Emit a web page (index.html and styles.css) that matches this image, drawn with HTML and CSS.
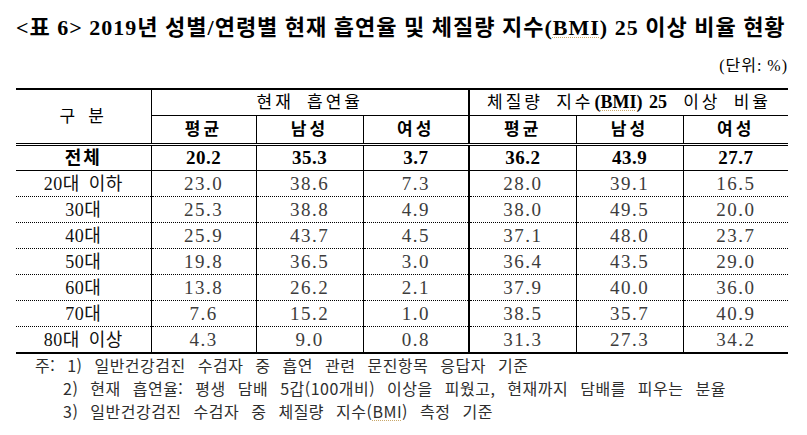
FILE: index.html
```html
<!DOCTYPE html>
<html lang="ko">
<head>
<meta charset="utf-8">
<title>표 6</title>
<link rel="stylesheet" href="styles.css">
</head>
<body>
<div class="page">
  <h1 class="title">&lt;표 6&gt; 2019년 성별/연령별 현재 흡연율 및 체질량 지수(<span class="bmi">BMI</span>) 25 이상 비율 현황</h1>
  <div class="unit">(단위: %)</div>
  <table class="stats">
    <colgroup>
      <col class="c-label"><col class="c-a"><col class="c-b"><col class="c-c"><col class="c-d"><col class="c-e"><col class="c-f">
    </colgroup>
    <thead>
      <tr class="h1">
        <th rowspan="2" class="label-head">구 분</th>
        <th colspan="3" class="group">현재 흡연율</th>
        <th colspan="3" class="group split">체질량 지수<span class="latin">(<span class="bmi">BMI</span>) 25</span> 이상 비율</th>
      </tr>
      <tr class="h2">
        <th>평균</th><th>남성</th><th>여성</th>
        <th class="split">평균</th><th>남성</th><th>여성</th>
      </tr>
    </thead>
    <tbody>
      <tr class="total">
        <td>전체</td><td>20.2</td><td>35.3</td><td>3.7</td><td class="split">36.2</td><td>43.9</td><td>27.7</td>
      </tr>
      <tr><td>20대 이하</td><td>23.0</td><td>38.6</td><td>7.3</td><td class="split">28.0</td><td>39.1</td><td>16.5</td></tr>
      <tr><td>30대</td><td>25.3</td><td>38.8</td><td>4.9</td><td class="split">38.0</td><td>49.5</td><td>20.0</td></tr>
      <tr><td>40대</td><td>25.9</td><td>43.7</td><td>4.5</td><td class="split">37.1</td><td>48.0</td><td>23.7</td></tr>
      <tr><td>50대</td><td>19.8</td><td>36.5</td><td>3.0</td><td class="split">36.4</td><td>43.5</td><td>29.0</td></tr>
      <tr><td>60대</td><td>13.8</td><td>26.2</td><td>2.1</td><td class="split">37.9</td><td>40.0</td><td>36.0</td></tr>
      <tr><td>70대</td><td>7.6</td><td>15.2</td><td>1.0</td><td class="split">38.5</td><td>35.7</td><td>40.9</td></tr>
      <tr class="last"><td>80대 이상</td><td>4.3</td><td>9.0</td><td>0.8</td><td class="split">31.3</td><td>27.3</td><td>34.2</td></tr>
    </tbody>
  </table>
  <div class="notes">
    <p class="note first">주: 1) 일반건강검진 수검자 중 흡연 관련 문진항목 응답자 기준</p>
    <p class="note">2) 현재 흡연율: 평생 담배 5갑(100개비) 이상을 피웠고, 현재까지 담배를 피우는 분율</p>
    <p class="note">3) 일반건강검진 수검자 중 체질량 지수(<span class="bmi">BMI</span>) 측정 기준</p>
  </div>
</div>
</body>
</html>
```

FILE: styles.css
```css
html, body {
  margin: 0;
  padding: 0;
  background: #ffffff;
}

.page {
  width: 772px;
  margin-left: 16px;
  color: #000;
}

.title {
  margin: 0;
  padding-top: 16px;
  font-family: "Liberation Serif", "Noto Sans CJK KR", serif;
  font-weight: 700;
  font-size: 22px;
  line-height: 24px;
  letter-spacing: 1px;
  white-space: nowrap;
}

.bmi {
  text-decoration: underline dotted #c9a86a;
  text-decoration-thickness: 1px;
  text-underline-offset: 2px;
}

.unit {
  margin-top: 16px;
  text-align: right;
  font-family: "Liberation Serif", "Noto Sans CJK KR", serif;
  font-size: 16px;
  line-height: 20px;
  letter-spacing: 1px;
}

.stats {
  margin-top: 12px;
  width: 772px;
  border-collapse: collapse;
  table-layout: fixed;
  font-family: "Liberation Serif", "Noto Sans CJK KR", serif;
}

.c-label { width: 135px; }
.c-a { width: 105px; }
.c-b { width: 107px; }
.c-c { width: 106px; }
.c-d { width: 107px; }
.c-e { width: 107px; }
.c-f { width: 105px; }

.stats th,
.stats td {
  padding: 0;
  text-align: center;
  vertical-align: middle;
  white-space: nowrap;
  line-height: 20px;
}

.stats th {
  font-size: 17px;
  letter-spacing: 3px;
  word-spacing: 3px;
  border-left: 1px solid #000;
}

.stats th.label-head {
  border-left: none;
  font-weight: 400;
}

.stats .h1 th {
  height: 25px;
  border-top: 2px solid #000;
  border-bottom: 1px solid #000;
}

.stats .h1 th.group {
  font-weight: 400;
  word-spacing: 6px;
}

.stats .h1 .latin {
  font-weight: 700;
  font-size: 18px;
  letter-spacing: 0;
  word-spacing: 2px;
  padding: 0 3px 0 1px;
}

.stats .h2 th {
  height: 27px;
  font-weight: 700;
  border-bottom: 3px double #000;
}

.stats th.label-head {
  border-bottom: 3px double #000;
}

.stats td {
  height: 25px;
  font-size: 19px;
  letter-spacing: 1.5px;
  color: #3c3c3c;
  border-left: 1px solid #000;
  border-bottom: 1px dotted #000;
}

.stats td:first-child {
  border-left: none;
  color: #111;
  font-size: 18px;
  letter-spacing: 0.5px;
  word-spacing: 4px;
}

.stats .split {
  border-left: 2px solid #000;
}

.stats .total td {
  height: 24px;
  font-weight: 700;
  color: #000;
  border-bottom: 1px solid #000;
  letter-spacing: 0.5px;
}

.stats .total td:first-child {
  letter-spacing: 2px;
}

.stats .last td {
  border-bottom: 2px solid #000;
}

.notes {
  margin-top: 0;
  font-family: "Noto Sans CJK KR", "Noto Sans", sans-serif;
  font-size: 16px;
  line-height: 23px;
  color: #2e2e2e;
  letter-spacing: 0.5px;
  word-spacing: 7px;
}

.note {
  margin: 0;
  padding-left: 47px;
  white-space: nowrap;
}

.note.first {
  padding-left: 19px;
}
```
